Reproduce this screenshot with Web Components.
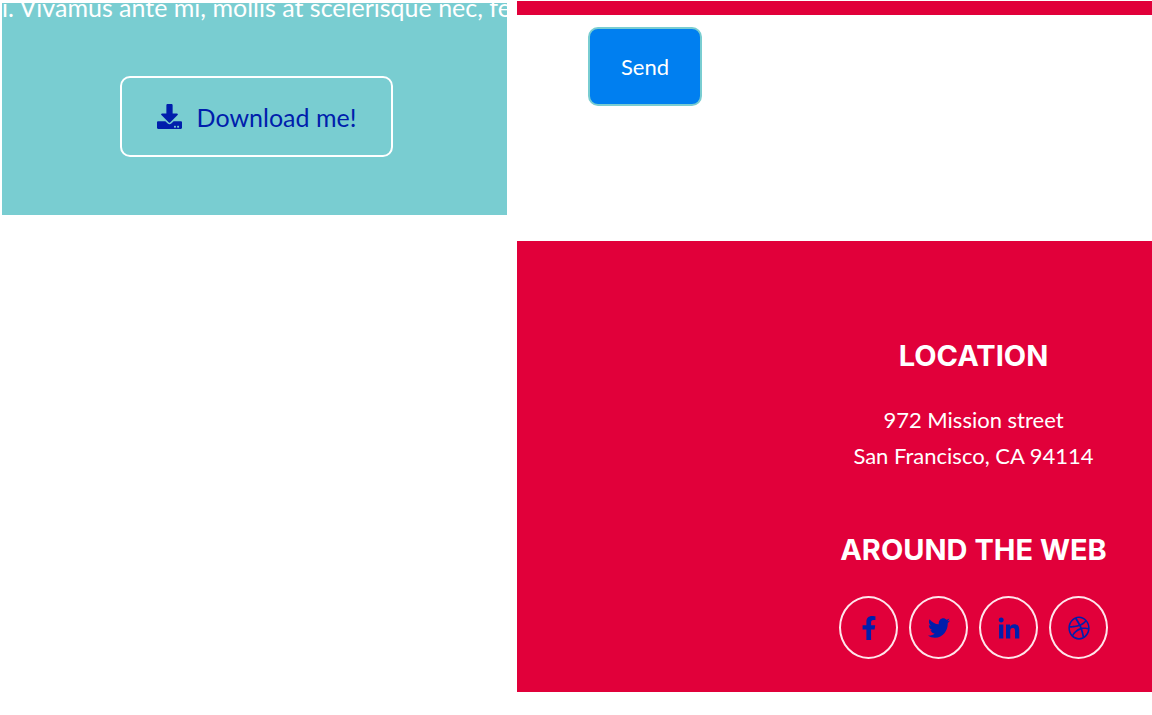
<!DOCTYPE html>
<html lang="en">
<head>
<meta charset="utf-8">
<meta name="viewport" content="width=device-width, initial-scale=1">
<title>Freelancer</title>
<style>
body { margin: 0; background: #fff; color: #fff; font-family: Lato, sans-serif; }
</style>
</head>
<body>
<page-columns>
  <about-panel slot="left">
    i. Vivamus ante mi, mollis at scelerisque nec, feu
    <download-link slot="action" href="#download">Download me!</download-link>
  </about-panel>
  <contact-panel slot="right"><send-button>Send</send-button></contact-panel>
  <site-footer slot="right">
    <footer-block heading="Location">972 Mission street<br>San Francisco, CA 94114</footer-block>
    <footer-block heading="Around the Web"><social-links></social-links></footer-block>
  </site-footer>
</page-columns>
<script>
function define(name, html, setup) {
  customElements.define(name, class extends HTMLElement {
    constructor() {
      super();
      this.attachShadow({ mode: 'open' }).innerHTML = html;
    }
    connectedCallback() { if (setup) setup(this, this.shadowRoot); }
  });
}

define('page-columns', `
<style>
:host { display: grid; grid-template-columns: 505fr 635fr; column-gap: 10px; padding-left: 2px; align-items: start; }
.left { padding-top: 3px; min-width: 0; }
.right { padding-top: 1px; min-width: 0; }
</style>
<div class="left"><slot name="left"></slot></div>
<main class="right"><slot name="right"></slot></main>`);

define('about-panel', `
<style>
:host { display: block; background: #79cdd1; overflow: hidden; padding-bottom: 58px; }
p { margin: -12px 0 0; font-size: 25px; line-height: 32px; white-space: nowrap; }
.action { display: flex; justify-content: center; padding: 53px 0 0 4px; }
</style>
<p><slot></slot></p>
<div class="action"><slot name="action"></slot></div>`);

define('download-link', `
<style>
:host { display: block; }
a { display: flex; align-items: center; gap: 15px; box-sizing: border-box; height: 81px; padding: 0 35px; border: 2px solid #fff; border-radius: 10px; color: #001eac; font-size: 25px; line-height: 32px; text-decoration: none; white-space: nowrap; }
svg { display: block; width: 25px; height: 25px; fill: currentColor; }
</style>
<a><svg viewBox="0 0 512 512" aria-hidden="true"><path d="M216 0h80c13.3 0 24 10.7 24 24v168h87.7c17.8 0 26.7 21.5 14.1 34.1L269.7 378.3c-7.5 7.5-19.8 7.5-27.3 0L90.1 226.1c-12.6-12.6-3.7-34.1 14.1-34.1H192V24c0-13.3 10.7-24 24-24zm296 376v112c0 13.3-10.7 24-24 24H24c-13.3 0-24-10.7-24-24V376c0-13.3 10.7-24 24-24h146.7l49 49c20.1 20.1 52.5 20.1 72.6 0l49-49H488c13.3 0 24 10.7 24 24zm-124 88c0-11-9-20-20-20s-20 9-20 20 9 20 20 20 20-9 20-20zm64 0c0-11-9-20-20-20s-20 9-20 20 9 20 20 20 20-9 20-20z"/></svg><span><slot></slot></span></a>`,
(el, root) => { root.querySelector('a').href = el.getAttribute('href'); });

define('contact-panel', `
<style>
:host { display: block; border-top: 14px solid #e1003a; padding: 12px 71px 135px; }
</style>
<slot></slot>`);

define('send-button', `
<style>
:host { display: flex; }
button { box-sizing: border-box; height: 79px; padding: 0 31px; border: 2px solid #79cdd1; border-radius: 10px; background: #007ff0; color: #fff; font: 22px/32px Lato, sans-serif; }
</style>
<button type="button"><slot></slot></button>`);

define('site-footer', `
<style>
:host { display: flex; justify-content: flex-end; background: #e1003a; padding: 97px 44px 33px; }
footer { display: grid; gap: 58px; }
</style>
<footer><slot></slot></footer>`);

define('footer-block', `
<style>
:host { display: block; text-align: center; font-size: 22px; line-height: 36px; white-space: nowrap; }
h2 { margin: 0 0 28px; font: 700 29px/36px Inter, sans-serif; text-transform: uppercase; }
</style>
<h2></h2>
<div><slot></slot></div>`,
(el, root) => { root.querySelector('h2').textContent = el.getAttribute('heading'); });

define('social-links', `
<style>
:host { display: block; }
nav { display: flex; justify-content: center; gap: 11px; }
a { display: flex; align-items: center; justify-content: center; box-sizing: border-box; width: 59px; height: 63px; border: 2px solid #ffe6ec; border-radius: 50%; color: #001eac; }
svg { display: block; height: 24px; width: 22px; fill: currentColor; }
</style>
<nav aria-label="Around the web">
<a href="#facebook" aria-label="Facebook"><svg viewBox="0 0 320 512" preserveAspectRatio="xMidYMid"><path d="M279.14 288l14.22-92.66h-88.91v-60.13c0-25.35 12.42-50.06 52.24-50.06h40.42V6.26S260.43 0 225.36 0c-73.22 0-121.08 44.38-121.08 124.72v70.62H22.89V288h81.39v224h100.17V288z"/></svg></a>
<a href="#twitter" aria-label="Twitter"><svg viewBox="0 0 512 512" preserveAspectRatio="none"><path d="M459.37 151.716c.325 4.548.325 9.097.325 13.645 0 138.72-105.583 298.558-298.558 298.558-59.452 0-114.68-17.219-161.137-47.106 8.447.974 16.568 1.299 25.34 1.299 49.055 0 94.213-16.568 130.274-44.832-46.132-.975-84.792-31.188-98.112-72.772 6.498.974 12.995 1.624 19.818 1.624 9.421 0 18.843-1.3 27.614-3.573-48.081-9.747-84.143-51.98-84.143-102.985v-1.299c13.969 7.797 30.214 12.67 47.431 13.319-28.264-18.843-46.781-51.005-46.781-87.391 0-19.492 5.197-37.36 14.294-52.954 51.655 63.675 129.3 105.258 216.365 109.807-1.624-7.797-2.599-15.918-2.599-24.04 0-57.828 46.782-104.934 104.934-104.934 30.213 0 57.502 12.67 76.67 33.137 23.715-4.548 46.456-13.32 66.599-25.34-7.798 24.366-24.366 44.833-46.132 57.827 21.117-2.273 41.584-8.122 60.426-16.243-14.292 20.791-32.161 39.308-52.628 54.253z"/></svg></a>
<a href="#linkedin" aria-label="LinkedIn"><svg viewBox="-16 -32 480 512" preserveAspectRatio="none"><path d="M100.28 448H7.4V148.9h92.88zM53.79 108.1C24.09 108.1 0 83.5 0 53.8a53.79 53.79 0 0 1 107.58 0c0 29.7-24.1 54.3-53.79 54.3zM447.9 448h-92.68V302.4c0-34.7-.7-79.2-48.29-79.2-48.29 0-55.69 37.7-55.69 76.7V448h-92.78V148.9h89.08v40.8h1.3c12.4-23.5 42.69-48.3 87.88-48.3 94 0 111.28 61.9 111.28 142.3V448z"/></svg></a>
<a href="#dribbble" aria-label="Dribbble"><svg viewBox="0 0 512 512" preserveAspectRatio="none"><path d="M256 8C119.252 8 8 119.252 8 256s111.252 248 248 248 248-111.252 248-248S392.748 8 256 8zm163.97 114.366c29.503 36.046 47.369 81.957 47.835 131.955-6.984-1.477-77.018-15.682-147.502-6.818-5.752-14.041-11.181-26.393-18.617-41.614 78.321-31.977 113.818-77.482 118.284-83.523zM396.421 97.87c-3.81 5.427-35.697 48.286-111.021 76.519-34.712-63.776-73.185-116.168-79.04-124.008 67.176-16.193 137.966 1.27 190.061 47.489zm-230.48-33.25c5.585 7.659 43.438 60.116 78.537 122.509-99.087 26.313-186.36 25.934-195.834 25.809C62.38 147.205 106.678 92.573 165.941 64.62zM44.17 256.323c0-2.166.043-4.322.108-6.473 9.268.19 111.92 1.513 217.706-30.146 6.064 11.868 11.857 23.915 17.174 35.949-76.599 21.575-146.194 83.527-180.531 142.306C64.794 360.405 44.17 310.73 44.17 256.323zm81.807 167.113c22.127-45.233 82.178-103.622 167.579-132.756 29.74 77.283 42.039 142.053 45.189 160.638-68.112 29.013-150.015 21.053-212.768-27.882zm248.38 8.489c-2.171-12.886-13.446-74.897-41.152-151.033 66.38-10.626 124.7 6.768 131.947 9.055-9.442 58.941-43.273 109.844-90.795 141.978z"/></svg></a>
</nav>`);
</script>
</body>
</html>
